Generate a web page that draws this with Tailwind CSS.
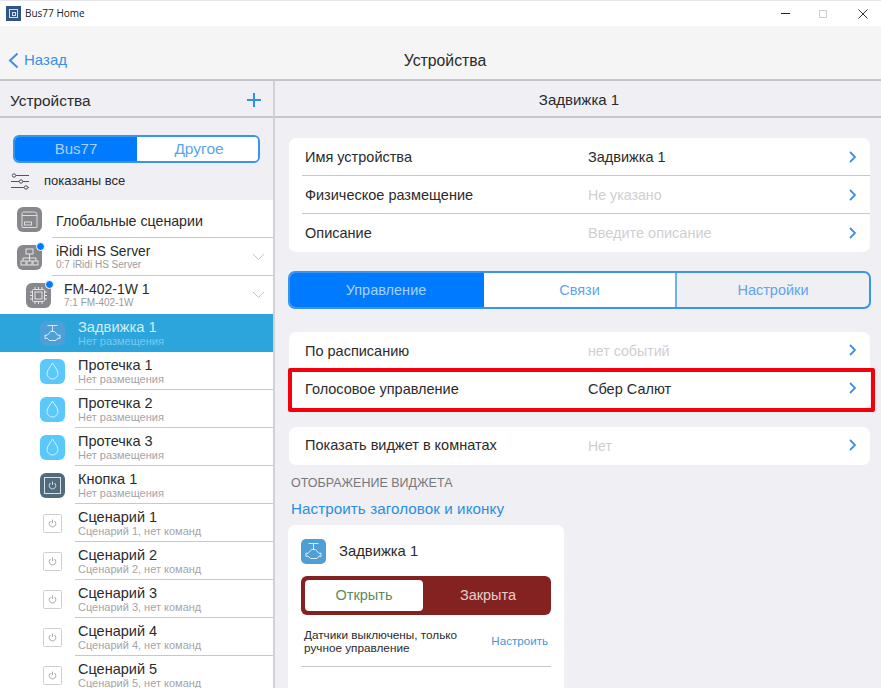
<!DOCTYPE html>
<html lang="ru">
<head>
<meta charset="utf-8">
<title>Bus77 Home</title>
<script src="https://cdn.jsdelivr.net/npm/@tailwindcss/browser@4"></script>
</head>
<body class="bg-white">
<div class="w-[881px] h-[688px] overflow-hidden flex flex-col font-['Liberation_Sans',sans-serif] text-[#2b2b2b] relative">

  <!-- title bar -->
  <div class="h-[26px] shrink-0 bg-white border-t border-[#e6e6ea] flex items-center relative">
    <div class="ml-[6px] w-[15px] h-[15px] bg-[#2f5587] flex items-center justify-center">
      <div class="w-[9px] h-[9px] border border-[#d5dfea] flex items-center justify-center"><div class="w-[4px] h-[4px] border border-[#d5dfea]"></div></div>
    </div>
    <span class="ml-[4px] text-[10px] text-[#222] font-['Open_Sans',sans-serif]">Bus77 Home</span>
    <div class="ml-auto flex items-center h-full">
      <div class="w-[32px] flex justify-center"><div class="w-[9px] h-px bg-[#222]"></div></div>
      <div class="w-[44px] flex justify-center"><div class="w-[8px] h-[8px] border border-[#cfcfcf]"></div></div>
      <div class="w-[36px] flex justify-center">
        <svg width="10" height="10" viewBox="0 0 10 10" fill="none" stroke="#333" stroke-width="1"><path d="M.5.500l9 9M9.500.500l-9 9"/></svg>
      </div>
    </div>
  </div>

  <!-- nav bar -->
  <div class="h-[55px] shrink-0 bg-[#f5f5f5] border-b-2 border-[#c6c6c8] flex items-end pb-[10px] relative">
    <div class="flex items-center pl-[8px] text-[#3d8fe6] text-[15px] leading-[18px]">
      <svg width="11" height="17" viewBox="0 0 11 17" fill="none" stroke="#3d8fe6" stroke-width="2"><path d="M9.500 1.500L2 8.500l7.500 7"/></svg>
      <span class="ml-[5px]">Назад</span>
    </div>
    <div class="absolute left-0 right-0 bottom-[9px] text-center text-[15.800px] leading-[18px] pl-[9px]">Устройства</div>
  </div>

  <div class="flex-1 flex min-h-0">
    <!-- left column -->
    <div class="w-[275px] shrink-0 border-r-2 border-[#d2d2d6] bg-[#efeff4] flex flex-col">
      <div class="h-[37px] shrink-0 border-b-2 border-[#c6c6c8] flex items-center justify-between pl-[10px] pr-[12px]">
        <span class="text-[15.400px] pt-[4px]">Устройства</span>
        <svg class="mt-[2px]" width="14" height="14" viewBox="0 0 14 14" fill="none" stroke="#2f8fee" stroke-width="2"><path d="M7 0v14M0 7h14"/></svg>
      </div>
      <div class="h-[82px] shrink-0">
        <div class="ml-[13px] mt-[17px] w-[247px] h-[28px] flex rounded-[6px] border-2 border-[#3a94ee] overflow-hidden text-[15px]">
          <div class="w-[122px] bg-[#007aff] text-[#a9d2fb] flex items-center justify-center">Bus77</div>
          <div class="flex-1 bg-white text-[#5da5ec] flex items-center justify-center text-[15.500px] pl-[3px]">Другое</div>
        </div>
        <div class="flex items-center ml-[11px] mt-[9px] h-[18px]">
          <svg width="18" height="17" viewBox="0 0 18 17" fill="none" stroke="#555" stroke-width="1">
            <path d="M5 2.500h13M0 8.500h8M12 8.500h6M0 14.500h13M17 14.500h1"/>
            <circle cx="3" cy="2.500" r="1.700"/><circle cx="10" cy="8.500" r="1.700"/><circle cx="15" cy="14.500" r="1.700"/>
          </svg>
          <span class="ml-[15px] text-[13px]">показаны все</span>
        </div>
      </div>

      <div class="flex-1 bg-white overflow-hidden">
        <!-- global -->
        <div class="h-[38px] flex items-center relative">
          <div class="ml-[17px] w-[25px] h-[25px] rounded-[6px] bg-[#88888c] flex items-center justify-center">
            <svg width="19" height="19" viewBox="0 0 19 19" fill="none" stroke="#dcdcdc" stroke-width="1"><path d="M2 17V3.500Q2 2 3.500 2H14.500Q17 2 17 4.500V17Q17 17.500 16.500 17.500H2.500Q2 17.500 2 17zM2 5.500h15"/><rect x="4.500" y="12" width="7" height="3"/></svg>
          </div>
          <span class="ml-[14px] text-[14.200px] pt-[6px]">Глобальные сценарии</span>
          <div class="absolute left-[52px] right-0 bottom-0 h-px bg-[#c8c8cc]"></div>
        </div>
        <!-- server -->
        <div class="h-[38px] flex items-center relative">
          <div class="ml-[17px] w-[25px] h-[25px] rounded-[6px] bg-[#88888c] flex items-center justify-center relative">
            <svg width="19" height="18" viewBox="0 0 19 18" fill="none" stroke="#e4e4e4" stroke-width="1"><rect x="6" y="1" width="7" height="5"/><path d="M9.500 6v4M3 13v-3h13v3M9.500 10v3"/><rect x="1" y="13" width="5" height="4"/><rect x="7" y="13" width="5" height="4"/><rect x="13" y="13" width="5" height="4"/></svg>
            <div class="absolute -top-[3px] -right-[3px] w-[9px] h-[9px] rounded-full bg-[#007aff] border border-white"></div>
          </div>
          <div class="ml-[14px] pt-px">
            <div class="text-[13.800px] leading-[15px]">iRidi HS Server</div>
            <div class="text-[10px] leading-[12px] text-[#9a9a9e]">0:7 iRidi HS Server</div>
          </div>
          <svg class="ml-auto mr-[8px]" width="13" height="8" viewBox="0 0 13 8" fill="none" stroke="#c4c4c8" stroke-width="1"><path d="M1 1l5.500 5.500L12 1"/></svg>
          <div class="absolute left-[52px] right-0 bottom-0 h-px bg-[#c8c8cc]"></div>
        </div>
        <!-- module -->
        <div class="h-[38px] flex items-center relative">
          <div class="ml-[26px] w-[25px] h-[25px] rounded-[6px] bg-[#88888c] flex items-center justify-center relative">
            <svg width="19" height="19" viewBox="0 0 19 19" fill="none" stroke="#e4e4e4" stroke-width="1"><rect x="3.500" y="3.500" width="12" height="12" rx="1"/><rect x="6" y="6" width="7" height="7"/><path d="M6 1v2M9.500 1v2M13 1v2M6 16v2M9.500 16v2M13 16v2M1 6h2M1 9.500h2M1 13h2M16 6h2M16 9.500h2M16 13h2"/></svg>
            <div class="absolute -top-[3px] -right-[3px] w-[9px] h-[9px] rounded-full bg-[#007aff] border border-white"></div>
          </div>
          <div class="ml-[13px] pt-px">
            <div class="text-[14px] leading-[15px]">FM-402-1W 1</div>
            <div class="text-[10px] leading-[12px] text-[#9a9a9e]">7:1 FM-402-1W</div>
          </div>
          <svg class="ml-auto mr-[8px]" width="13" height="8" viewBox="0 0 13 8" fill="none" stroke="#c4c4c8" stroke-width="1"><path d="M1 1l5.500 5.500L12 1"/></svg>
        </div>
        <!-- selected -->
        <div class="h-[38px] flex items-center bg-[#2ba5dc]">
          <div class="ml-[40px] w-[25px] h-[25px] rounded-[6px] bg-[#4e9fd6] flex items-center justify-center">
            <svg width="19" height="19" viewBox="0 0 19 19" fill="none" stroke="#dcecf6" stroke-width="1"><path d="M4.500 1.500h10M9.500 1.500V7.500M2 11l2 .5 3.500-4h4l3.500 4 2-.5v3.500l-2-.5-2 2.500H6.500L4 14l-2 .5z"/></svg>
          </div>
          <div class="ml-[13px] pt-[2px]">
            <div class="text-[14.700px] leading-[15px] text-[#d4ecf8]">Задвижка 1</div>
            <div class="text-[11px] leading-[13px] text-[#7fc6e8]">Нет размещения</div>
          </div>
        </div>
        <!-- sensors -->
        <div class="h-[38px] flex items-center relative">
          <div class="ml-[40px] w-[25px] h-[25px] rounded-[6px] bg-[#5ac8fa] flex items-center justify-center">
            <svg width="13" height="18" viewBox="0 0 13 18" fill="none" stroke="#d9f2fd" stroke-width="1"><path d="M6.500 1C5 4 1 8 1 11.500a5.500 5.500 0 0 0 11 0C12 8 8 4 6.500 1z"/></svg>
          </div>
          <div class="ml-[13px] pt-[2px]">
            <div class="text-[14.500px] leading-[15px]">Протечка 1</div>
            <div class="text-[11px] leading-[13px] text-[#a4a4a8]">Нет размещения</div>
          </div>
          <div class="absolute left-[75px] right-0 bottom-0 h-px bg-[#c8c8cc]"></div>
        </div>
        <div class="h-[38px] flex items-center relative">
          <div class="ml-[40px] w-[25px] h-[25px] rounded-[6px] bg-[#5ac8fa] flex items-center justify-center">
            <svg width="13" height="18" viewBox="0 0 13 18" fill="none" stroke="#d9f2fd" stroke-width="1"><path d="M6.500 1C5 4 1 8 1 11.500a5.500 5.500 0 0 0 11 0C12 8 8 4 6.500 1z"/></svg>
          </div>
          <div class="ml-[13px] pt-[2px]">
            <div class="text-[14.500px] leading-[15px]">Протечка 2</div>
            <div class="text-[11px] leading-[13px] text-[#a4a4a8]">Нет размещения</div>
          </div>
          <div class="absolute left-[75px] right-0 bottom-0 h-px bg-[#c8c8cc]"></div>
        </div>
        <div class="h-[38px] flex items-center relative">
          <div class="ml-[40px] w-[25px] h-[25px] rounded-[6px] bg-[#5ac8fa] flex items-center justify-center">
            <svg width="13" height="18" viewBox="0 0 13 18" fill="none" stroke="#d9f2fd" stroke-width="1"><path d="M6.500 1C5 4 1 8 1 11.500a5.500 5.500 0 0 0 11 0C12 8 8 4 6.500 1z"/></svg>
          </div>
          <div class="ml-[13px] pt-[2px]">
            <div class="text-[14.500px] leading-[15px]">Протечка 3</div>
            <div class="text-[11px] leading-[13px] text-[#a4a4a8]">Нет размещения</div>
          </div>
          <div class="absolute left-[75px] right-0 bottom-0 h-px bg-[#c8c8cc]"></div>
        </div>
        <!-- button -->
        <div class="h-[38px] flex items-center relative">
          <div class="ml-[40px] w-[25px] h-[25px] rounded-[6px] bg-[#516b7c] flex items-center justify-center">
            <svg width="19" height="19" viewBox="0 0 19 19" fill="none" stroke="#d8e0e5" stroke-width="1"><rect x="1.500" y="1.500" width="16" height="16"/><path d="M7.500 7a3.300 3.300 0 1 0 4 0M9.500 5.500v3.500"/></svg>
          </div>
          <div class="ml-[13px] pt-[2px]">
            <div class="text-[14.500px] leading-[15px]">Кнопка 1</div>
            <div class="text-[11px] leading-[13px] text-[#a4a4a8]">Нет размещения</div>
          </div>
          <div class="absolute left-[75px] right-0 bottom-0 h-px bg-[#c8c8cc]"></div>
        </div>
        <!-- scenes -->
        <div class="h-[38px] flex items-center relative">
          <div class="ml-[40px] w-[25px] h-[25px] flex items-center justify-center">
            <svg width="19" height="19" viewBox="0 0 19 19" fill="none"><rect x=".500" y=".500" width="18" height="18" rx="1" stroke="#d0d0d4"/><path d="M7.500 7a3.300 3.300 0 1 0 4 0M9.500 5.500v3.500" stroke="#a8a8ac"/></svg>
          </div>
          <div class="ml-[13px] pt-[2px]">
            <div class="text-[14.500px] leading-[15px]">Сценарий 1</div>
            <div class="text-[11px] leading-[13px] text-[#a4a4a8]">Сценарий 1, нет команд</div>
          </div>
          <div class="absolute left-[75px] right-0 bottom-0 h-px bg-[#c8c8cc]"></div>
        </div>
        <div class="h-[38px] flex items-center relative">
          <div class="ml-[40px] w-[25px] h-[25px] flex items-center justify-center">
            <svg width="19" height="19" viewBox="0 0 19 19" fill="none"><rect x=".500" y=".500" width="18" height="18" rx="1" stroke="#d0d0d4"/><path d="M7.500 7a3.300 3.300 0 1 0 4 0M9.500 5.500v3.500" stroke="#a8a8ac"/></svg>
          </div>
          <div class="ml-[13px] pt-[2px]">
            <div class="text-[14.500px] leading-[15px]">Сценарий 2</div>
            <div class="text-[11px] leading-[13px] text-[#a4a4a8]">Сценарий 2, нет команд</div>
          </div>
          <div class="absolute left-[75px] right-0 bottom-0 h-px bg-[#c8c8cc]"></div>
        </div>
        <div class="h-[38px] flex items-center relative">
          <div class="ml-[40px] w-[25px] h-[25px] flex items-center justify-center">
            <svg width="19" height="19" viewBox="0 0 19 19" fill="none"><rect x=".500" y=".500" width="18" height="18" rx="1" stroke="#d0d0d4"/><path d="M7.500 7a3.300 3.300 0 1 0 4 0M9.500 5.500v3.500" stroke="#a8a8ac"/></svg>
          </div>
          <div class="ml-[13px] pt-[2px]">
            <div class="text-[14.500px] leading-[15px]">Сценарий 3</div>
            <div class="text-[11px] leading-[13px] text-[#a4a4a8]">Сценарий 3, нет команд</div>
          </div>
          <div class="absolute left-[75px] right-0 bottom-0 h-px bg-[#c8c8cc]"></div>
        </div>
        <div class="h-[38px] flex items-center relative">
          <div class="ml-[40px] w-[25px] h-[25px] flex items-center justify-center">
            <svg width="19" height="19" viewBox="0 0 19 19" fill="none"><rect x=".500" y=".500" width="18" height="18" rx="1" stroke="#d0d0d4"/><path d="M7.500 7a3.300 3.300 0 1 0 4 0M9.500 5.500v3.500" stroke="#a8a8ac"/></svg>
          </div>
          <div class="ml-[13px] pt-[2px]">
            <div class="text-[14.500px] leading-[15px]">Сценарий 4</div>
            <div class="text-[11px] leading-[13px] text-[#a4a4a8]">Сценарий 4, нет команд</div>
          </div>
          <div class="absolute left-[75px] right-0 bottom-0 h-px bg-[#c8c8cc]"></div>
        </div>
        <div class="h-[38px] flex items-center relative">
          <div class="ml-[40px] w-[25px] h-[25px] flex items-center justify-center">
            <svg width="19" height="19" viewBox="0 0 19 19" fill="none"><rect x=".500" y=".500" width="18" height="18" rx="1" stroke="#d0d0d4"/><path d="M7.500 7a3.300 3.300 0 1 0 4 0M9.500 5.500v3.500" stroke="#a8a8ac"/></svg>
          </div>
          <div class="ml-[13px] pt-[2px]">
            <div class="text-[14.500px] leading-[15px]">Сценарий 5</div>
            <div class="text-[11px] leading-[13px] text-[#a4a4a8]">Сценарий 5, нет команд</div>
          </div>
        </div>
      </div>
    </div>

    <!-- right column -->
    <div class="flex-1 bg-[#efeff4] flex flex-col min-w-0">
      <div class="h-[37px] shrink-0 border-b-2 border-[#c6c6c8] flex items-center justify-center text-[15px] pl-[2px] pt-[4px]">Задвижка 1</div>
      <div class="pl-[13px] pr-[10px] text-[14.500px]">
        <!-- info card -->
        <div class="mt-[20px] ml-px w-[581px] bg-white rounded-[7px]">
          <div class="h-[38px] flex items-center pl-[16px] pt-[2px] relative">
            <span class="w-[283px]">Имя устройства</span><span>Задвижка 1</span>
            <svg class="absolute right-[14px] top-[13px]" width="7" height="12" viewBox="0 0 7 12" fill="none" stroke="#3d8fe6" stroke-width="1.800"><path d="M1 1l5 5-5 5"/></svg>
            <div class="absolute left-[13px] right-0 bottom-0 h-px bg-[#c8c8cc]"></div>
          </div>
          <div class="h-[38px] flex items-center pl-[16px] pt-[2px] relative">
            <span class="w-[283px]">Физическое размещение</span><span class="text-[#cfcfd3] text-[14.200px]">Не указано</span>
            <svg class="absolute right-[14px] top-[13px]" width="7" height="12" viewBox="0 0 7 12" fill="none" stroke="#3d8fe6" stroke-width="1.800"><path d="M1 1l5 5-5 5"/></svg>
            <div class="absolute left-[13px] right-0 bottom-0 h-px bg-[#c8c8cc]"></div>
          </div>
          <div class="h-[38px] flex items-center pl-[16px] pt-[2px] relative">
            <span class="w-[283px]">Описание</span><span class="text-[#cfcfd3]">Введите описание</span>
            <svg class="absolute right-[14px] top-[13px]" width="7" height="12" viewBox="0 0 7 12" fill="none" stroke="#3d8fe6" stroke-width="1.800"><path d="M1 1l5 5-5 5"/></svg>
          </div>
        </div>

        <!-- tabs -->
        <div class="mt-[19px] w-[583px] h-[38px] flex rounded-[7px] border-2 border-[#3a94ee] overflow-hidden bg-[#efeff4]">
          <div class="w-[194px] bg-[#007aff] text-[#a9d2fb] flex items-center justify-center pt-[2px] pr-[2px]">Управление</div>
          <div class="w-[191px] bg-white text-[#5da5ec] flex items-center justify-center pt-[2px]">Связи</div>
          <div class="flex-1 border-l-2 border-[#6fb0ee] text-[#5da5ec] flex items-center justify-center pt-[2px]">Настройки</div>
        </div>

        <!-- schedule card -->
        <div class="mt-[23px] ml-px w-[581px] bg-white rounded-[7px]">
          <div class="h-[38px] flex items-center pl-[16px] pt-[2px] relative">
            <span class="w-[283px]">По расписанию</span><span class="text-[#cfcfd3] text-[14.200px]">нет событий</span>
            <svg class="absolute right-[14px] top-[12px]" width="7" height="12" viewBox="0 0 7 12" fill="none" stroke="#3d8fe6" stroke-width="1.800"><path d="M1 1l5 5-5 5"/></svg>
          </div>
          <div class="h-[38px] flex items-center pl-[16px] pt-[2px] relative">
            <span class="w-[283px]">Голосовое управление</span><span>Сбер Салют</span>
            <svg class="absolute right-[14px] top-[12px]" width="7" height="12" viewBox="0 0 7 12" fill="none" stroke="#3d8fe6" stroke-width="1.800"><path d="M1 1l5 5-5 5"/></svg>
            <!-- red highlight drawn over the row -->
            <div class="absolute -left-px -top-[2px] w-[587px] h-[44px] border-[4px] border-[#f5000a] rounded-[2px]"></div>
          </div>
        </div>

        <div class="mt-[19px] ml-px w-[581px] h-[38px] bg-white rounded-[7px] flex items-center pl-[16px] relative">
          <span class="w-[283px] whitespace-nowrap">Показать виджет в комнатах</span><span class="text-[#cfcfd3] text-[14px]">Нет</span>
          <svg class="absolute right-[14px] top-[12px]" width="7" height="12" viewBox="0 0 7 12" fill="none" stroke="#3d8fe6" stroke-width="1.800"><path d="M1 1l5 5-5 5"/></svg>
        </div>

        <div class="mt-[11px] ml-[3px] text-[12.500px] leading-[15px] text-[#77777b]">ОТОБРАЖЕНИЕ ВИДЖЕТА</div>
        <div class="mt-[10px] ml-[3px] text-[15.200px] leading-[16px] tracking-[0.07px] text-[#2a8fe0]">Настроить заголовок и иконку</div>

        <!-- widget card -->
        <div class="mt-[8px] w-[276px] h-[200px] bg-white rounded-[7px] pt-[14px] px-[13px]">
          <div class="flex items-center h-[25px]">
            <div class="w-[25px] h-[25px] rounded-[5px] bg-[#4e9fd6] flex items-center justify-center">
              <svg width="19" height="19" viewBox="0 0 19 19" fill="none" stroke="#dcecf6" stroke-width="1"><path d="M4.500 1.500h10M9.500 1.500V7.500M2 11l2 .5 3.500-4h4l3.500 4 2-.5v3.500l-2-.5-2 2.500H6.500L4 14l-2 .5z"/></svg>
            </div>
            <span class="ml-[13px] text-[14.800px]">Задвижка 1</span>
          </div>
          <div class="mt-[12px] w-[250px] h-[39px] rounded-[6px] bg-[#842222] flex items-center p-[4px]">
            <div class="w-[118px] h-[31px] rounded-[4px] bg-white text-[#5c8a62] flex items-center justify-center">Открыть</div>
            <div class="flex-1 text-center text-[#e6cfcf] pl-[6px]">Закрыта</div>
          </div>
          <div class="mt-[13px] w-[250px] flex items-center justify-between pb-[12px] border-b border-[#c8c8cc]">
            <div class="ml-[3px] text-[11.750px] leading-[13px]">Датчики выключены, только<br>ручное управление</div>
            <span class="text-[11.600px] text-[#3d98dc] mr-[3px]">Настроить</span>
          </div>
        </div>
      </div>
    </div>
  </div>
</div>
</body>
</html>
